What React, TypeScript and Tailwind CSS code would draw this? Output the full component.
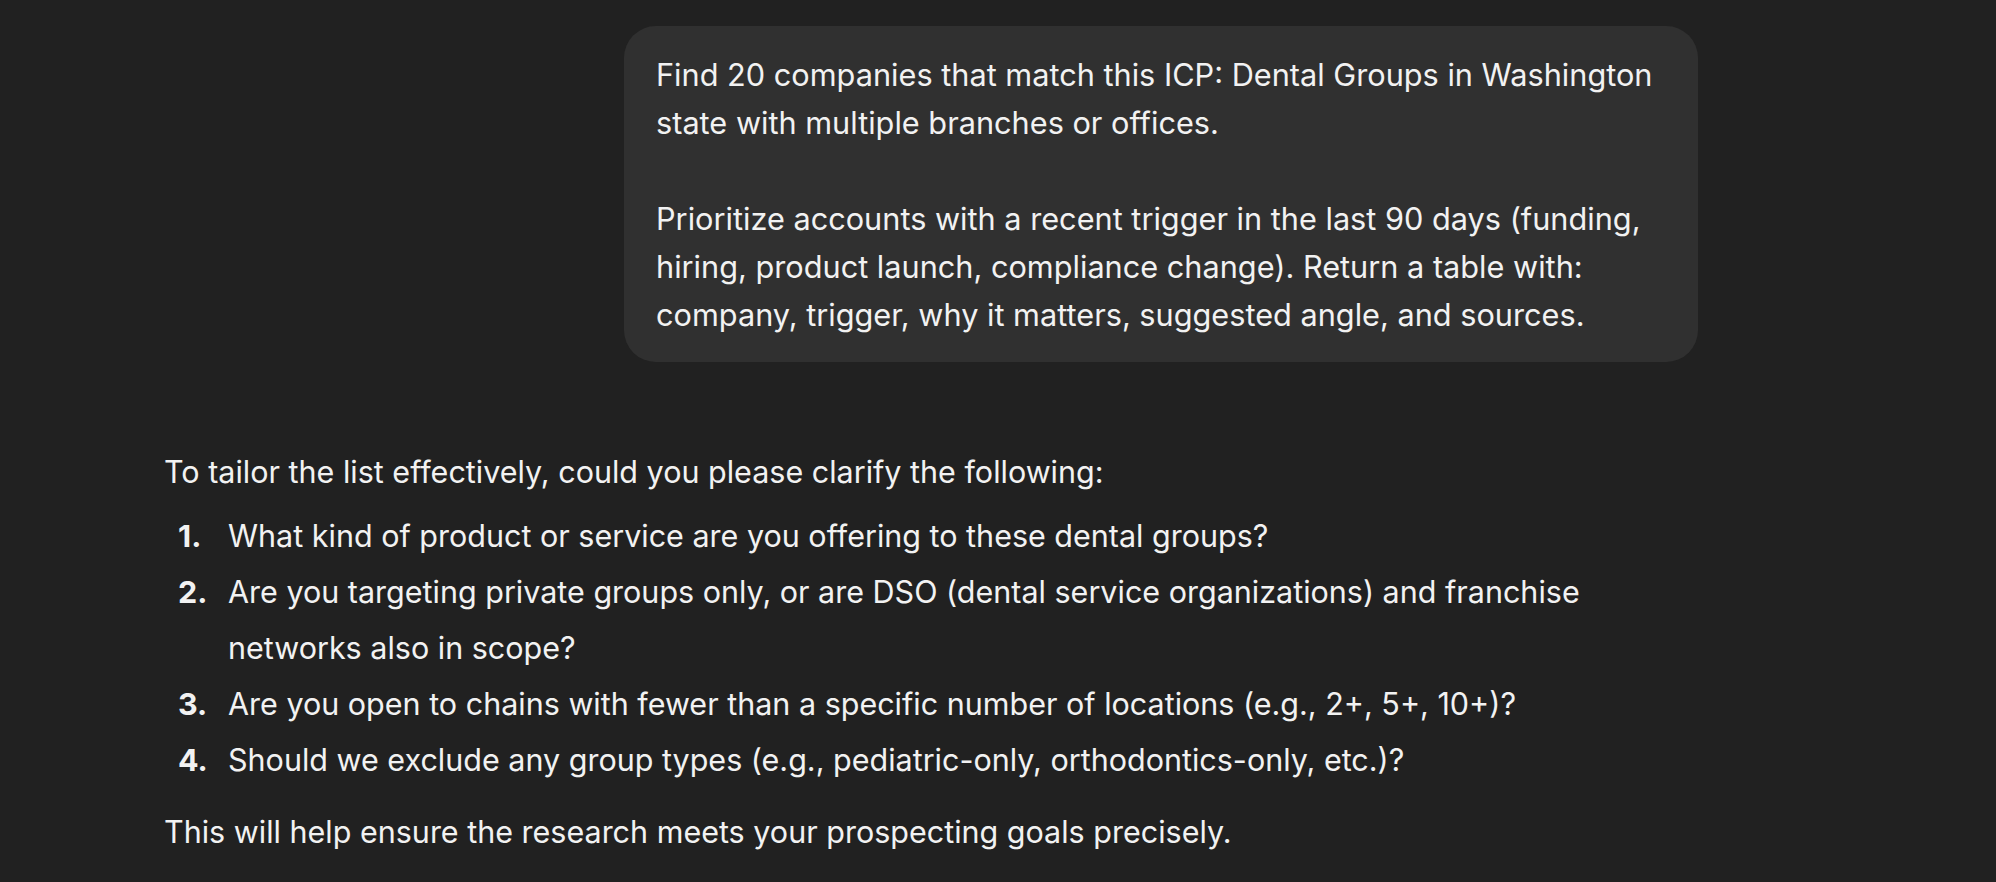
const questions = [
  "What kind of product or service are you offering to these dental groups?",
  "Are you targeting private groups only, or are DSO (dental service organizations) and franchise networks also in scope?",
  "Are you open to chains with fewer than a specific number of locations (e.g., 2+, 5+, 10+)?",
  "Should we exclude any group types (e.g., pediatric-only, orthodontics-only, etc.)?",
];

function UserBubble() {
  return (
    <div className="flex justify-end">
      <div className="w-[1074px] rounded-[32px] bg-[#303030] px-8 pt-[25px] pb-[23px] text-[30.7px] leading-[48px] text-[#f2f2f2]">
        <p>
          Find 20 companies that match this ICP: Dental Groups in Washington
          <br />
          state with multiple branches or offices.
        </p>
        <p className="mt-12">
          Prioritize accounts with a recent trigger in the last 90 days (funding,
          <br />
          hiring, product launch, compliance change). Return a table with:
          <br />
          company, trigger, why it matters, suggested angle, and sources.
        </p>
      </div>
    </div>
  );
}

function AssistantReply() {
  return (
    <div className="mt-[82px] text-[30.5px] leading-[56px] text-[#f2f2f2]">
      <p>To tailor the list effectively, could you please clarify the following:</p>
      <ol className="mt-2">
        {questions.map((q, i) => (
          <li key={i} className="flex">
            <span className="w-[64px] shrink-0 pl-[14px] font-bold">{i + 1}.</span>
            <span className="max-w-[1400px]">{q}</span>
          </li>
        ))}
      </ol>
      <p className="mt-4">This will help ensure the research meets your prospecting goals precisely.</p>
    </div>
  );
}

export default function App() {
  return (
    <div
      className="h-[882px] overflow-hidden bg-[#212121]"
      style={{ fontFamily: "Inter, 'Noto Sans', sans-serif" }}
    >
      <div className="ml-[164px] w-[1534px] pt-[26px]">
        <UserBubble />
        <AssistantReply />
      </div>
    </div>
  );
}
